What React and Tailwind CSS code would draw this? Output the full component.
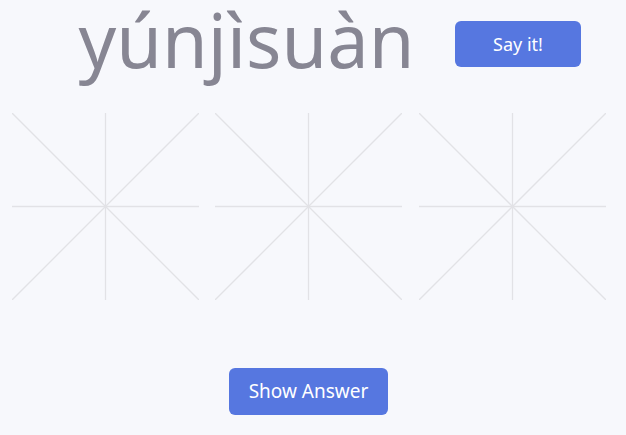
import React from 'react';

const GridBox = () => (
    <div className="w-[187px] h-[187px]">
        <svg width="187" height="187" viewBox="0 0 187 187" className="block">
            <g stroke="#e2e2e6" strokeWidth="1.3" fill="none">
                <line x1="0" y1="0" x2="187" y2="187" />
                <line x1="187" y1="0" x2="0" y2="187" />
                <line x1="93.5" y1="0" x2="93.5" y2="187" />
                <line x1="0" y1="93.5" x2="187" y2="93.5" />
            </g>
        </svg>
    </div>
);

const App = () => {
    return (
        <div className="w-[626px] h-[435px] bg-[#f7f8fc] overflow-hidden font-['Noto_Sans',sans-serif]">
            {/* Header */}
            <div className="flex items-start h-[90px]">
                <div className="w-[490px] flex justify-center pt-[3px]">
                    <h1 className="text-[74px] leading-none text-[#878693] font-normal ml-[3px]">yúnjìsuàn</h1>
                </div>
                <button className="ml-[-35px] mt-[21px] w-[126px] h-[46px] rounded-[6px] bg-[#5677e0] text-white text-[18px]">
                    Say it!
                </button>
            </div>

            {/* Writing grids */}
            <div className="flex gap-[16px] pl-[12px] mt-[23px]">
                <GridBox />
                <GridBox />
                <div className="ml-[1px]">
                    <GridBox />
                </div>
            </div>

            <div className="flex justify-center mt-[68px] pr-[9px]">
                <button className="w-[159px] h-[47px] rounded-[6px] bg-[#5677e0] text-white text-[19px]">
                    Show Answer
                </button>
            </div>
        </div>
    );
};

export default App;
